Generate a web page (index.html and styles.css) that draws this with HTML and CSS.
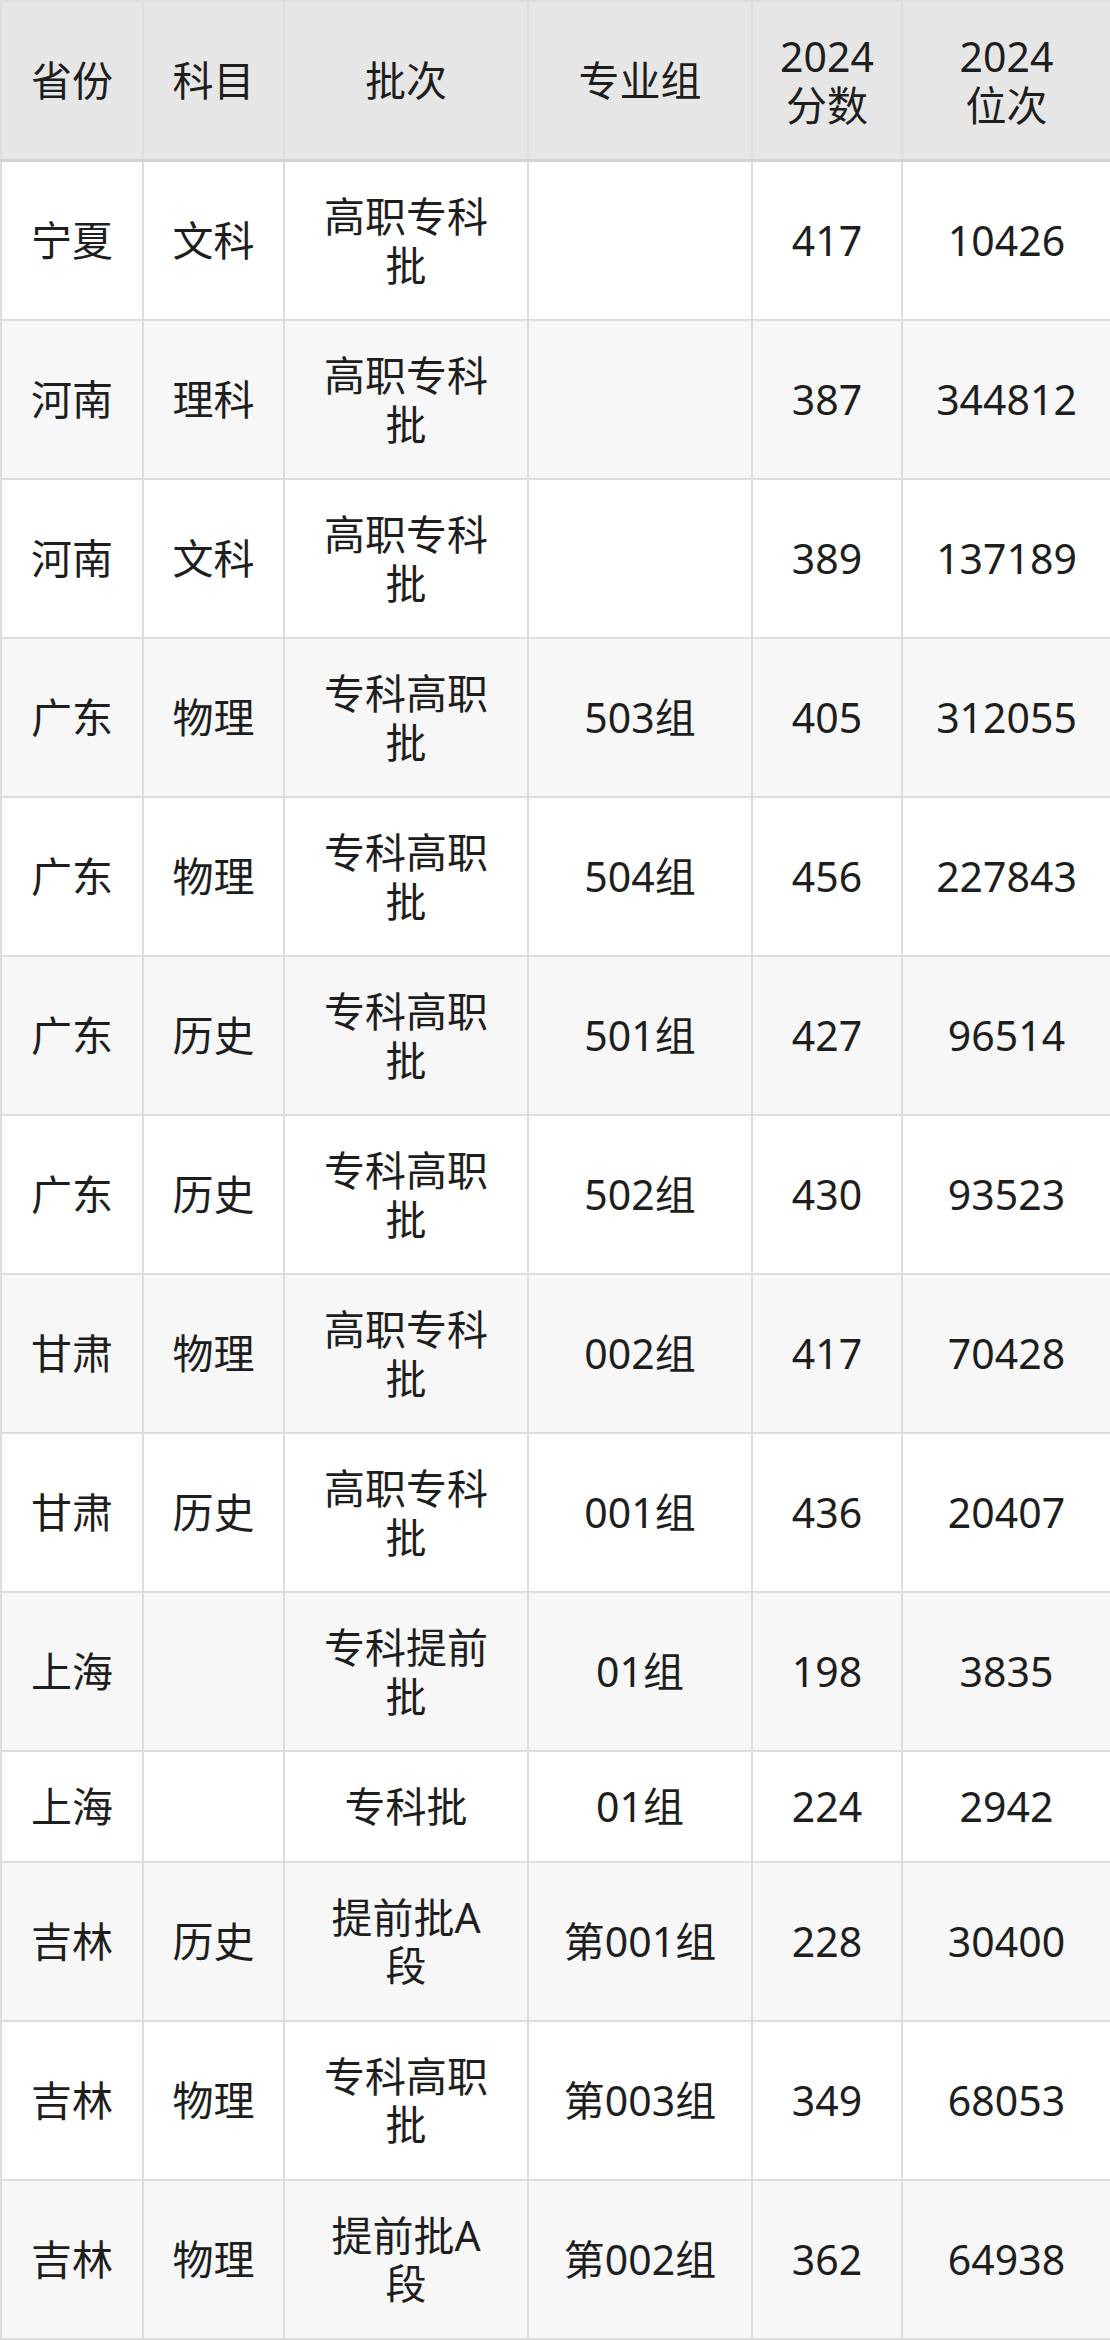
FILE: index.html
```html
<!DOCTYPE html>
<html lang="zh-CN">
<head>
<meta charset="utf-8">
<title>分数位次</title>
<link rel="stylesheet" href="styles.css">
</head>
<body>
<table class="score-table">
  <colgroup>
    <col class="c1"><col class="c2"><col class="c3"><col class="c4"><col class="c5"><col class="c6">
  </colgroup>
  <thead>
    <tr><th>省份</th><th>科目</th><th>批次</th><th>专业组</th><th>2024<br>分数</th><th>2024<br>位次</th></tr>
  </thead>
  <tbody>
    <tr><td>宁夏</td><td>文科</td><td>高职专科<br>批</td><td></td><td>417</td><td>10426</td></tr>
    <tr><td>河南</td><td>理科</td><td>高职专科<br>批</td><td></td><td>387</td><td>344812</td></tr>
    <tr><td>河南</td><td>文科</td><td>高职专科<br>批</td><td></td><td>389</td><td>137189</td></tr>
    <tr><td>广东</td><td>物理</td><td>专科高职<br>批</td><td>503组</td><td>405</td><td>312055</td></tr>
    <tr><td>广东</td><td>物理</td><td>专科高职<br>批</td><td>504组</td><td>456</td><td>227843</td></tr>
    <tr><td>广东</td><td>历史</td><td>专科高职<br>批</td><td>501组</td><td>427</td><td>96514</td></tr>
    <tr><td>广东</td><td>历史</td><td>专科高职<br>批</td><td>502组</td><td>430</td><td>93523</td></tr>
    <tr><td>甘肃</td><td>物理</td><td>高职专科<br>批</td><td>002组</td><td>417</td><td>70428</td></tr>
    <tr><td>甘肃</td><td>历史</td><td>高职专科<br>批</td><td>001组</td><td>436</td><td>20407</td></tr>
    <tr><td>上海</td><td></td><td>专科提前<br>批</td><td>01组</td><td>198</td><td>3835</td></tr>
    <tr><td>上海</td><td></td><td>专科批</td><td>01组</td><td>224</td><td>2942</td></tr>
    <tr><td>吉林</td><td>历史</td><td>提前批A<br>段</td><td>第001组</td><td>228</td><td>30400</td></tr>
    <tr><td>吉林</td><td>物理</td><td>专科高职<br>批</td><td>第003组</td><td>349</td><td>68053</td></tr>
    <tr><td>吉林</td><td>物理</td><td>提前批A<br>段</td><td>第002组</td><td>362</td><td>64938</td></tr>
  </tbody>
</table>
</body>
</html>
```
FILE: styles.css
```css
html, body {
  margin: 0;
  padding: 0;
  background: #ffffff;
}
.score-table {
  width: 1110px;
  table-layout: fixed;
  border-collapse: collapse;
  font-family: "Noto Sans", "Noto Sans CJK SC", sans-serif;
  font-size: 41px;
  line-height: 48.5px;
  color: #1e1e1e;
}
.c1 { width: 142px; }
.c2 { width: 141px; }
.c3 { width: 244px; }
.c4 { width: 224px; }
.c5 { width: 150px; }
.c6 { width: 209px; }
.score-table th,
.score-table td {
  border: 2px solid #dddddd;
  padding: 30px 0;
  text-align: center;
  vertical-align: middle;
  font-weight: 400;
}
.score-table th {
  background: #e6e6e6;
  border-bottom: 3px solid #d3d3d3;
}
.score-table tbody tr:nth-child(odd) td { background: #ffffff; }
.score-table tbody tr:nth-child(even) td { background: #f7f7f7; }
```
